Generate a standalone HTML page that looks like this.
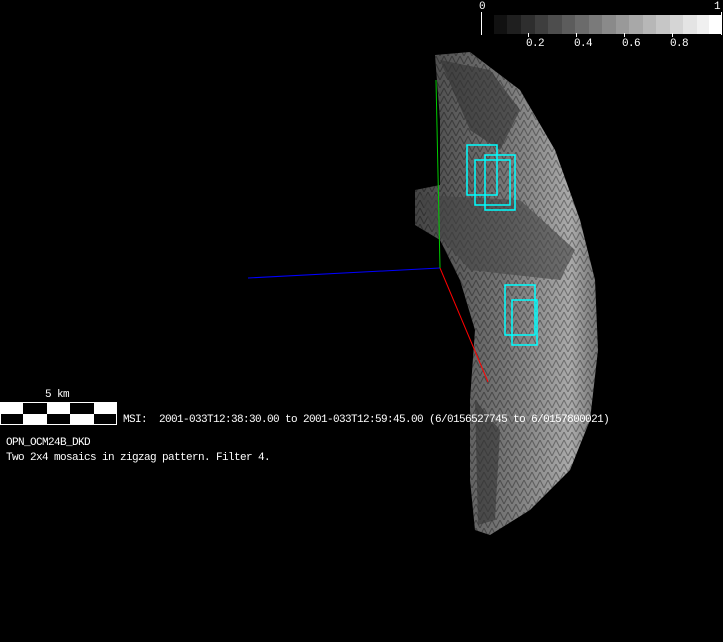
<!DOCTYPE html>
<html><head><style>
body{margin:0;background:#000;width:723px;height:642px;overflow:hidden;position:relative;font-family:"Liberation Mono",monospace;color:#fff}
.t{position:absolute;font-size:11px;white-space:pre;line-height:12px;letter-spacing:-0.6px}
</style></head><body>
<svg width="723" height="642" style="position:absolute;left:0;top:0">
<defs>
<linearGradient id="g" x1="0" y1="0" x2="1" y2="0">
<stop offset="0" stop-color="#444"/><stop offset="0.5" stop-color="#777"/><stop offset="0.85" stop-color="#aaa"/><stop offset="1" stop-color="#777"/>
</linearGradient>
<pattern id="p" width="8" height="8" patternUnits="userSpaceOnUse">
<path d="M0 8L4 0L8 8" fill="none" stroke="#000" stroke-opacity=".35" stroke-width="1"/>
</pattern>
</defs>
<path d="M435 55L470 52L520 90L555 150L580 220L595 280L598 350L590 420L570 470L530 510L490 535L475 530L470 480L470 400L475 330L460 280L440 240L415 225L415 190L440 185L440 120Z" fill="url(#g)"/>
<path d="M435 55L470 52L520 90L555 150L580 220L595 280L598 350L590 420L570 470L530 510L490 535L475 530L470 480L470 400L475 330L460 280L440 240L415 225L415 190L440 185L440 120Z" fill="url(#p)"/>
<path d="M440 60L490 70L520 110L500 150L470 130Z" fill="#333" opacity=".6"/>
<path d="M420 195L520 200L575 250L560 280L470 270L430 225Z" fill="#444" opacity=".6"/>
<path d="M475 400L500 430L495 520L478 525Z" fill="#333" opacity=".6"/>
<line x1="440" y1="268" x2="248" y2="278" stroke="#00f"/>
<line x1="440" y1="268" x2="436" y2="80" stroke="#0c0"/>
<line x1="440" y1="268" x2="488" y2="382" stroke="#f00"/>
<g fill="none" stroke="#0ff" stroke-width="1.5">
<path d="M467 145h30v50h-30zM475 160h35v45h-35zM485 155h30v55h-30z"/>
<path d="M505 285h30v50h-30zM512 300h25v45h-25z"/>
</g>
<rect x="0.5" y="402.5" width="116" height="22" fill="#fff" stroke="#fff"/>
<rect x="23" y="403" width="24" height="11" fill="#000"/><rect x="70" y="403" width="24" height="11" fill="#000"/>
<rect x="1" y="414" width="22" height="10" fill="#000"/><rect x="47" y="414" width="23" height="10" fill="#000"/><rect x="94" y="414" width="22" height="10" fill="#000"/>
<g>
<rect x="494" y="15" width="13.5" height="19" fill="#111"/><rect x="507" y="15" width="14" height="19" fill="#1f1f1f"/><rect x="521" y="15" width="14" height="19" fill="#2e2e2e"/><rect x="535" y="15" width="13" height="19" fill="#3e3e3e"/><rect x="548" y="15" width="14" height="19" fill="#4d4d4d"/><rect x="562" y="15" width="13" height="19" fill="#5c5c5c"/><rect x="575" y="15" width="14" height="19" fill="#6b6b6b"/><rect x="589" y="15" width="13" height="19" fill="#7a7a7a"/><rect x="602" y="15" width="14" height="19" fill="#8a8a8a"/><rect x="616" y="15" width="13" height="19" fill="#999"/><rect x="629" y="15" width="14" height="19" fill="#a8a8a8"/><rect x="643" y="15" width="13" height="19" fill="#b7b7b7"/><rect x="656" y="15" width="14" height="19" fill="#c6c6c6"/><rect x="670" y="15" width="13" height="19" fill="#d5d5d5"/><rect x="683" y="15" width="14" height="19" fill="#e4e4e4"/><rect x="697" y="15" width="12" height="19" fill="#f0f0f0"/><rect x="709" y="15" width="13" height="19" fill="#fff"/>
</g>
<line x1="481.5" y1="12" x2="481.5" y2="35" stroke="#fff"/>
<line x1="721.5" y1="12" x2="721.5" y2="35" stroke="#fff"/>
<g stroke="#fff"><line x1="528.5" y1="33" x2="528.5" y2="37"/><line x1="576.5" y1="33" x2="576.5" y2="37"/><line x1="624.5" y1="33" x2="624.5" y2="37"/><line x1="672.5" y1="33" x2="672.5" y2="37"/></g>
</svg>
<div class="t" style="left:479px;top:1px">0</div>
<div class="t" style="left:714px;top:1px">1</div>
<div class="t" style="left:526px;top:38px">0.2</div>
<div class="t" style="left:574px;top:38px">0.4</div>
<div class="t" style="left:622px;top:38px">0.6</div>
<div class="t" style="left:670px;top:38px">0.8</div>
<div class="t" style="left:45px;top:389px">5 km</div>
<div class="t" style="left:123px;top:414px">MSI:  2001-033T12:38:30.00 to 2001-033T12:59:45.00 (6/0156527745 to 6/0157800021)</div>
<div class="t" style="left:6px;top:437px">OPN_OCM24B_DKD</div>
<div class="t" style="left:6px;top:452px">Two 2x4 mosaics in zigzag pattern. Filter 4.</div>
</body></html>
